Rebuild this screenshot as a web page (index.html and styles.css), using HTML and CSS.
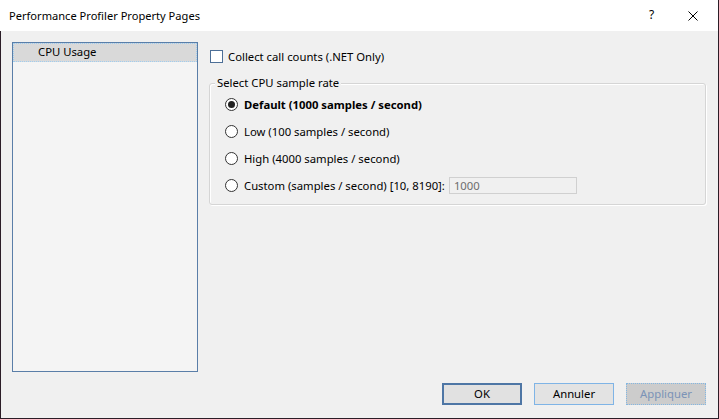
FILE: index.html
```html
<!DOCTYPE html>
<html>
<head>
<meta charset="utf-8">
<link rel="stylesheet" href="styles.css">
</head>
<body>
<div class="window">
  <div class="titlebar">
    <div class="title">Performance Profiler Property Pages</div>
    <div class="tb-help">?</div>
    <div class="tb-close">
      <svg width="10" height="10" viewBox="0 0 10 10"><path d="M0.5 0.5 L9.5 9.5 M9.5 0.5 L0.5 9.5" stroke="#000" stroke-width="1" fill="none"/></svg>
    </div>
  </div>
  <div class="client">
    <div class="panes">
      <div class="sidebar">
        <div class="side-item selected">CPU Usage</div>
      </div>
      <div class="content">
        <label class="check-row">
          <span class="checkbox"></span>
          <span>Collect call counts (.NET Only)</span>
        </label>
        <div class="group">
          <div class="legend">Select CPU sample rate</div>
          <div class="radio-row">
            <span class="radio checked"></span>
            <span class="bold">Default (1000 samples / second)</span>
          </div>
          <div class="radio-row">
            <span class="radio"></span>
            <span>Low (100 samples / second)</span>
          </div>
          <div class="radio-row">
            <span class="radio"></span>
            <span>High (4000 samples / second)</span>
          </div>
          <div class="radio-row">
            <span class="radio"></span>
            <span>Custom (samples / second) [10, 8190]:</span>
            <span class="input">1000</span>
          </div>
        </div>
      </div>
    </div>
    <div class="footer">
      <div class="btn default">OK</div>
      <div class="btn hover">Annuler</div>
      <div class="btn disabled">Appliquer</div>
    </div>
  </div>
</div>
</body>
</html>
```
FILE: styles.css
```css
* { box-sizing: border-box; }
html, body { margin: 0; padding: 0; }
body {
  width: 719px;
  height: 419px;
  font-family: "Noto Sans", "Open Sans", sans-serif;
  font-size: 11.3px;
  color: #000;
  background: #f0f0f0;
}
.window {
  width: 719px;
  height: 419px;
  display: flex;
  flex-direction: column;
  border-right: 1px solid #2b1d27;
  border-bottom: 1px solid #2b1d27;
}
.titlebar {
  height: 31px;
  background: #fff;
  display: flex;
  align-items: center;
  padding-left: 9px;
  flex: none;
}
.title {
  flex: 1;
  font-size: 11.1px;
  padding-bottom: 1px;
}
.tb-help {
  width: 12px;
  margin-right: 27px;
  font-size: 12px;
  padding-bottom: 2px;
}
.tb-close {
  width: 10px;
  height: 10px;
  margin-right: 20px;
  display: flex;
}
.client {
  flex: 1;
  display: flex;
  flex-direction: column;
  border-left: 1px solid #2b1d27;
}
.panes {
  display: flex;
  padding: 11px 0 0 11px;
}
.sidebar {
  width: 186px;
  height: 330px;
  border: 1px solid #5a7ea8;
  background: #f4f4f4;
  padding: 0;
}
.side-item {
  height: 19px;
  line-height: 18px;
  padding-left: 25px;
}
.side-item.selected {
  background: #d9d9d9;
  outline: 1px dotted #9fcdf0;
  outline-offset: -1px;
}
.content {
  margin-left: 11px;
  width: 497px;
}
.check-row {
  display: flex;
  align-items: center;
  height: 15px;
  margin-top: 7px;
}
.checkbox {
  width: 13px;
  height: 13px;
  border: 1px solid #4d6f97;
  background: #fff;
  margin-left: 1px;
  margin-right: 5px;
}
.group {
  position: relative;
  margin-top: 19px;
  height: 122px;
  border: 1px solid #d5d5d5;
  border-radius: 3px;
  box-shadow: 1px 1px 0 #fff, inset 1px 1px 0 #fff;
  padding: 12px 0 0 15px;
}
.legend {
  position: absolute;
  top: -9px;
  left: 5px;
  padding: 0 2px;
  background: #f0f0f0;
  line-height: 16px;
}
.radio-row {
  display: flex;
  align-items: center;
  height: 17px;
  margin-bottom: 10px;
}
.radio {
  width: 13px;
  height: 13px;
  border: 1px solid #333;
  border-radius: 50%;
  background: #fff;
  margin-right: 6px;
  position: relative;
  flex: none;
}
.radio.checked::after {
  content: "";
  position: absolute;
  left: 2px;
  top: 2px;
  width: 7px;
  height: 7px;
  border-radius: 50%;
  background: #222;
}
.bold { font-weight: bold; }
.input {
  margin-left: 4px;
  width: 128px;
  height: 17px;
  border: 1px solid #d0d0d0;
  background: #f0f0f0;
  color: #6d6d6d;
  padding-left: 4px;
  line-height: 15px;
}
.footer {
  margin-top: auto;
  display: flex;
  justify-content: flex-end;
  gap: 12px;
  padding: 0 12px 13px 0;
}
.btn {
  width: 80px;
  height: 22px;
  display: flex;
  align-items: center;
  justify-content: center;
  background: #e1e1e1;
  border: 1px solid #adadad;
  padding-bottom: 1px;
}
.btn.default {
  border: 2px solid #4e76a5;
}
.btn.hover {
  border: 1px solid #7fb4e6;
  background: #e3e3e3;
}
.btn.disabled {
  background: #cccccc;
  border: 1px dotted #83b7e3;
  color: #7b93b7;
}
```
